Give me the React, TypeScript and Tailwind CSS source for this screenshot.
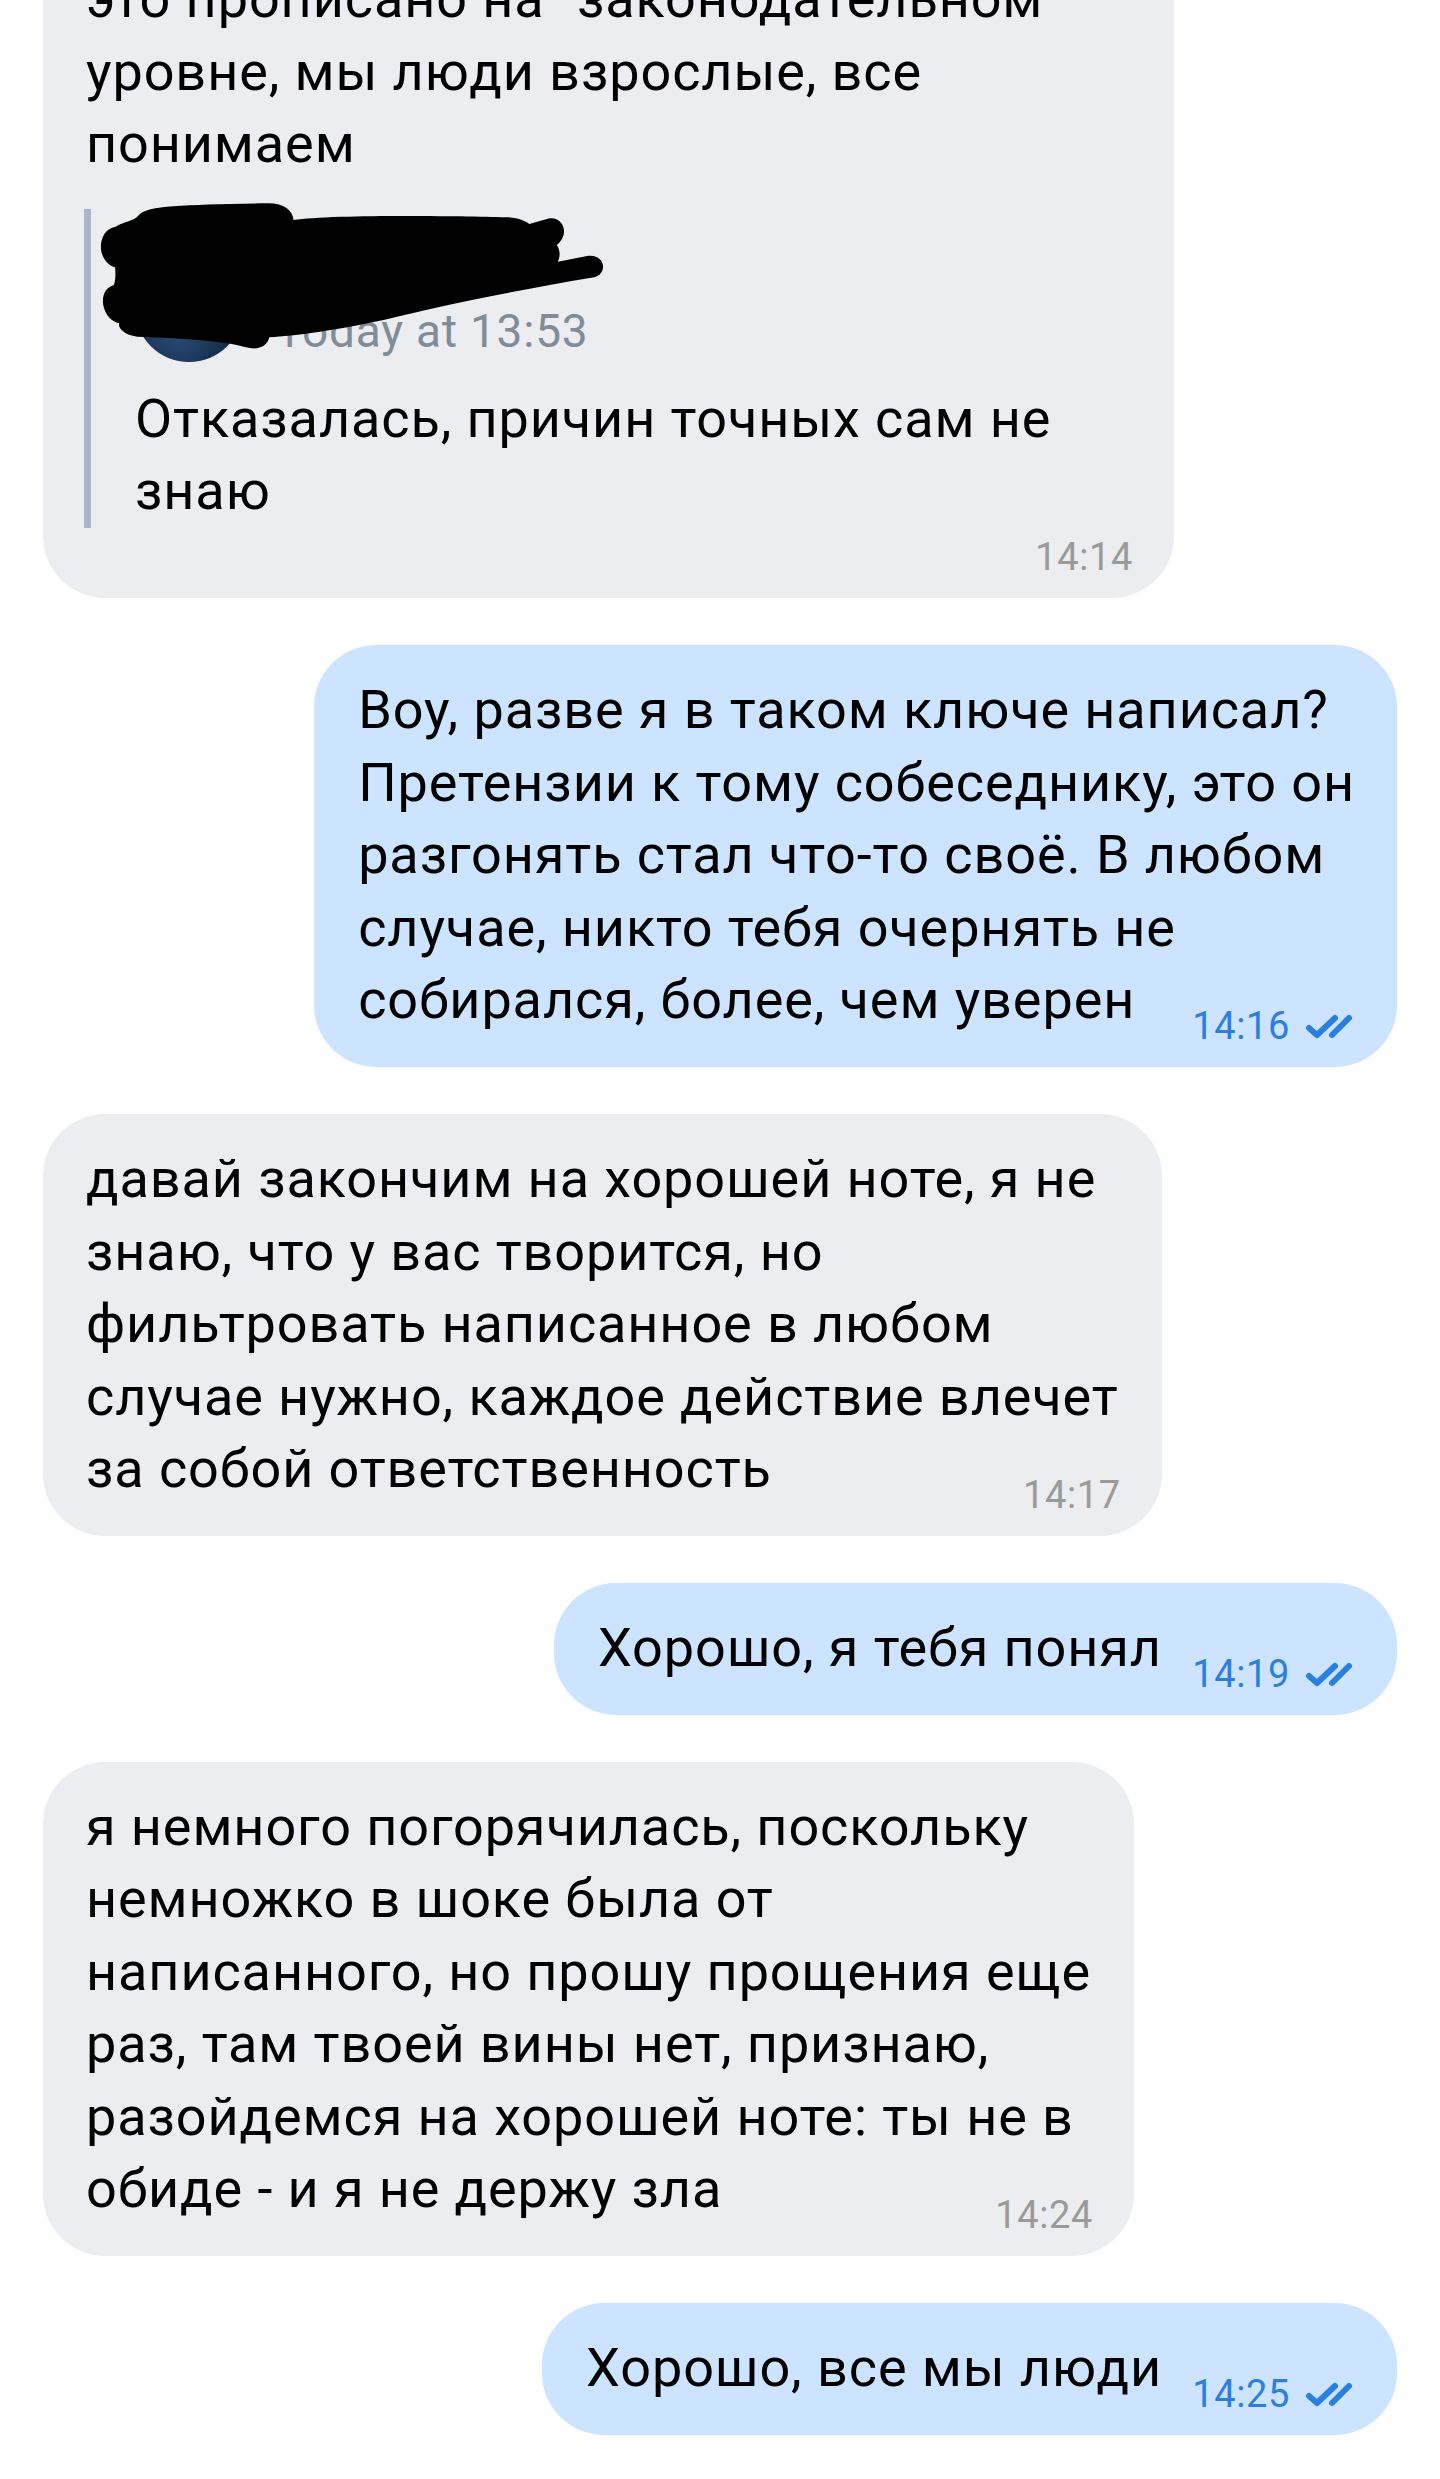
import React from "react";

// двойная галочка "прочитано"
const ReadTicks = () => (
  <svg width="52" height="28" viewBox="0 0 52 28" fill="none" stroke="#2b7fe0" strokeWidth="6" strokeLinecap="round" strokeLinejoin="round">
    <path d="M6 16 L14 23 L32 6" />
    <path d="M29 23 L46 6" />
  </svg>
);

// закрашенное имя в цитате
const Scribble = () => (
  <svg className="absolute left-[-11px] top-[-19px] w-[560px] h-[190px]" viewBox="0 0 1568 570" preserveAspectRatio="none">
    <path
      fill="#000"
      d="M100 110 C120 95,150 95,165 75 C190 45,300 45,520 40 C570 38,595 60,598 90 C700 72,1100 78,1200 82 C1230 84,1250 95,1258 102 L1310 86 C1350 75,1375 130,1335 165 C1345 180,1345 200,1338 215 L1420 198 C1470 190,1480 250,1440 262 C1200 305,1000 350,850 390 C720 420,600 438,530 442 C525 470,495 482,465 472 C420 455,300 445,160 440 C120 435,105 410,110 400 C60 390,45 300,95 285 C100 270,100 245,98 232 C45 215,45 120,100 110 Z"
    />
  </svg>
);

const InTime = ({ t }: { t: string }) => (
  <span className="absolute right-[41px] bottom-[19px] text-[38px] leading-[44px] tracking-[0.6px] text-[#9a9a9a]">{t}</span>
);

const OutTime = ({ t }: { t: string }) => (
  <span className="absolute right-[42px] bottom-[19px] flex items-center gap-[13px] text-[38px] leading-[44px] tracking-[0.6px] text-[#2b7fe0]">
    {t}
    <ReadTicks />
  </span>
);

const inBubble = "relative self-start ml-[43px] rounded-[62px] bg-[#ebedf0] pl-[43px] pr-[43px] pt-[29px] pb-[30px]";
const outBubble = "relative self-end mr-[43px] rounded-[62px] bg-[#cce4ff] pl-[44px] pr-[42px] pt-[29px] pb-[30px]";
const textCls = "text-[54px] leading-[72.6px] tracking-[0.9px] text-black whitespace-nowrap";

export default function App() {
  return (
    <div className="w-[1440px] h-[2479px] overflow-hidden bg-white font-['Roboto','Noto_Sans',sans-serif]">
      <div className="flex flex-col gap-[47px] -mt-[66px]">
        {/* входящее с цитатой */}
        <div className="relative self-start ml-[43px] w-[1131px] rounded-[62px] bg-[#ebedf0] pl-[43px] pr-[43px] pt-[29px] pb-[70px]">
          <div className={textCls}>
            это прописано на "законодательном"
            <br />
            уровне, мы люди взрослые, все
            <br />
            понимаем
          </div>
          <div className="relative mt-[28px] -ml-[2px] border-l-[7px] border-[#a9b6c8] pl-[44px] pt-[40px]">
            <div className="flex items-end">
              <div className="w-[108px] h-[108px] rounded-full bg-[radial-gradient(circle_at_40%_70%,#2b4f7c,#0d1f38_70%)]" />
              <div className="ml-[33px] mb-[5px] flex flex-col">
                <div className="h-[56px]" />
                <span className="text-[46px] leading-[52px] tracking-[0.8px] text-[#818c99]">Today at 13:53</span>
              </div>
            </div>
            <div className={`mt-[21px] ${textCls}`}>
              Отказалась, причин точных сам не
              <br />
              знаю
            </div>
            <Scribble />
          </div>
          <InTime t="14:14" />
        </div>

        <div className={outBubble}>
          <div className={textCls}>
            Воу, разве я в таком ключе написал?
            <br />
            Претензии к тому собеседнику, это он
            <br />
            разгонять стал что-то своё. В любом
            <br />
            случае, никто тебя очернять не
            <br />
            собирался, более, чем уверен<span className="inline-block w-[193px]" />
          </div>
          <OutTime t="14:16" />
        </div>

        <div className={inBubble}>
          <div className={textCls}>
            давай закончим на хорошей ноте, я не
            <br />
            знаю, что у вас творится, но
            <br />
            фильтровать написанное в любом
            <br />
            случае нужно, каждое действие влечет
            <br />
            за собой ответственность<span className="inline-block w-[130px]" />
          </div>
          <InTime t="14:17" />
        </div>

        <div className={outBubble}>
          <div className={textCls}>
            Хорошо, я тебя понял<span className="inline-block w-[193px]" />
          </div>
          <OutTime t="14:19" />
        </div>

        <div className={inBubble}>
          <div className={textCls}>
            я немного погорячилась, поскольку
            <br />
            немножко в шоке была от
            <br />
            написанного, но прошу прощения еще
            <br />
            раз, там твоей вины нет, признаю,
            <br />
            разойдемся на хорошей ноте: ты не в
            <br />
            обиде - и я не держу зла<span className="inline-block w-[130px]" />
          </div>
          <InTime t="14:24" />
        </div>

        <div className={outBubble}>
          <div className={textCls}>
            Хорошо, все мы люди<span className="inline-block w-[193px]" />
          </div>
          <OutTime t="14:25" />
        </div>
      </div>
    </div>
  );
}
